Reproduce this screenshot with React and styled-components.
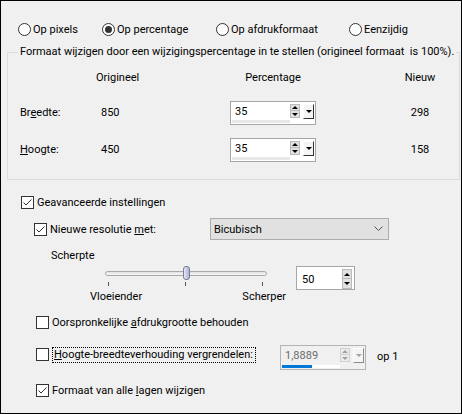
import React from "react";
import styled, { createGlobalStyle } from "styled-components";

const GlobalStyle = createGlobalStyle`
  body {
    margin: 0;
    background: #f0f0f0;
    font-family: Roboto, "Liberation Sans", sans-serif;
    font-size: 11px;
    color: #000;
  }
`;

const Window = styled.div`
  width: 462px;
  height: 414px;
  box-sizing: border-box;
  border: 1px solid #000;
  background: #f0f0f0;
  padding-top: 20px;
  line-height: 15px;
`;

const RadioRow = styled.div`
  display: grid;
  grid-template-columns: 84px 114px 133px auto;
  padding-left: 17px;
  height: 17px;
  align-items: center;
`;

const RadioOption = styled.label`
  display: flex;
  align-items: center;
  gap: 2px;
`;

const RadioCircle = styled.span`
  width: 13px;
  height: 13px;
  box-sizing: border-box;
  border: 1px solid #333;
  border-radius: 50%;
  background: #fff;
  display: flex;
  align-items: center;
  justify-content: center;
  &::after {
    content: "";
    width: 7px;
    height: 7px;
    border-radius: 50%;
    background: ${(p) => (p.$checked ? "#333" : "transparent")};
  }
`;

const Group = styled.fieldset`
  margin: 7px 0 0 6px;
  width: 453px;
  box-sizing: border-box;
  padding: 0 0 17px 12px;
  border: 1px solid #dcdcdc;
`;

const Legend = styled.legend`
  margin-left: -2px;
  padding: 0 2px;
  line-height: 14px;
`;

const SizeGrid = styled.div`
  display: grid;
  grid-template-columns: 76px 134px 86px 74px 60px;
  grid-template-rows: 17px 24px 24px;
  row-gap: 13px;
  padding-top: 12px;
  align-items: center;
`;

const Head = styled.div`
  grid-column: ${(p) => p.$col};
  align-self: start;
  line-height: 14px;
  text-align: ${(p) => (p.$center ? "center" : "left")};
`;

const Cell = styled.div`
  grid-column: ${(p) => p.$col};
  padding-left: ${(p) => p.$indent || 0}px;
  margin-top: ${(p) => p.$up || 0}px;
  text-align: ${(p) => (p.$center ? "center" : "left")};
`;

const SpinBox = styled.div`
  width: ${(p) => p.$w}px;
  height: ${(p) => p.$h || 24}px;
  box-sizing: border-box;
  border: 1px solid ${(p) => (p.$disabled ? "#b4b4b4" : "#a6a6a6")};
  background: ${(p) => (p.$disabled ? "#f0f0f0" : "#fff")};
  display: flex;
  margin-left: ${(p) => p.$ml || 0}px;
  flex-shrink: 0;
`;

const Field = styled.div`
  flex: 1;
  display: flex;
  flex-direction: column;
  justify-content: space-between;
  padding: 2px 0 1px 1px;
`;

const FieldText = styled.span`
  padding-left: ${(p) => p.$pad || 3}px;
  color: ${(p) => (p.$disabled ? "#6d6d6d" : "#000")};
  padding-top: ${(p) => p.$top || 0}px;
`;

const Bar = styled.div`
  height: 3px;
  background: ${(p) => (p.$disabled ? "#fff" : "#e8e8e8")};
  display: flex;
`;

const BarFill = styled.div`
  background: #0078d7;
  height: 100%;
`;

const SpinButtons = styled.div`
  display: flex;
  flex-direction: column;
  padding-top: 2px;
  margin-right: ${(p) => (p.$big ? 2 : 1)}px;
`;

const SpinBtn = styled.div`
  width: 10px;
  height: ${(p) => (p.$big ? 10 : 7)}px;
  box-sizing: border-box;
  background: ${(p) => (p.$disabled ? "#ececec" : "#e1e1e1")};
  border: 1px solid ${(p) => (p.$disabled ? "#d0d0d0" : "#b9b9b9")};
  display: flex;
  align-items: center;
  justify-content: center;
  & + & {
    border-top: none;
  }
`;

const Arrow = styled.span`
  width: 0;
  height: 0;
  border-left: 3px solid transparent;
  border-right: 3px solid transparent;
  ${(p) => (p.$up ? "border-bottom" : "border-top")}: 3px solid
    ${(p) => (p.$disabled ? "#a0a0a0" : "#000")};
`;

const DropBtn = styled.div`
  width: 11px;
  height: 15px;
  margin: 2px 1px 0 2px;
  box-sizing: border-box;
  background: #f4f4f4;
  border: 1px solid #fff;
  border-right-color: ${(p) => (p.$disabled ? "#8a8a8a" : "#333")};
  border-bottom-color: ${(p) => (p.$disabled ? "#8a8a8a" : "#333")};
  display: flex;
  align-items: center;
  justify-content: center;
`;

const Advanced = styled.div`
  display: flex;
  flex-direction: column;
  padding: 15px 0 0 20px;
`;

const CheckRow = styled.div`
  display: flex;
  align-items: ${(p) => p.$align || "center"};
  margin-top: ${(p) => p.$mt || 0}px;
  padding-left: ${(p) => p.$indent || 0}px;
  height: ${(p) => p.$h || 15}px;
`;

const CheckLabel = styled.label`
  display: flex;
  align-items: ${(p) => p.$align || "center"};
  gap: 3px;
  width: ${(p) => (p.$w ? p.$w + "px" : "auto")};
  flex-shrink: 0;
`;

const LabelText = styled.span`
  white-space: nowrap;
`;

const Box = styled.span`
  width: 13px;
  height: 13px;
  box-sizing: border-box;
  border: 1px solid #333;
  background: #fff;
  display: flex;
  align-items: center;
  justify-content: center;
  flex-shrink: 0;
  margin-top: ${(p) => p.$mt || 0}px;
`;

const FocusText = styled.span`
  border: 1px dotted #000;
  padding: 0 0 0 1px;
  width: 204px;
  height: 16px;
  box-sizing: border-box;
  line-height: 14px;
  white-space: nowrap;
`;

const Select = styled.div`
  width: 179px;
  height: 22px;
  box-sizing: border-box;
  border: 1px solid #adadad;
  background: #e1e1e1;
  display: flex;
  align-items: center;
  justify-content: space-between;
  padding: 0 5px 0 3px;
`;

const Caption = styled.div`
  margin-top: 9px;
  padding-left: 30px;
  height: 14px;
  line-height: 14px;
`;

const SliderRow = styled.div`
  display: flex;
  margin-top: 3px;
  padding-left: 69px;
  gap: 10px;
  align-items: flex-start;
`;

const SliderBlock = styled.div`
  width: 196px;
  display: flex;
  flex-direction: column;
`;

const TrackArea = styled.div`
  position: relative;
  height: 14px;
  margin-left: 15px;
  width: 162px;
  display: flex;
  align-items: center;
`;

const Track = styled.div`
  width: 100%;
  height: 5px;
  box-sizing: border-box;
  border: 1px solid #a9a9a9;
  border-radius: 3px;
  background: linear-gradient(#e2e2e2, #f6f6f6);
`;

const Thumb = styled.div`
  position: absolute;
  top: 0;
  width: 7px;
  height: 14px;
  box-sizing: border-box;
  border: 1px solid #7c7c8c;
  border-radius: 3px;
  background: linear-gradient(90deg, #e6e8f8, #c3c7e6 60%, #aab0d8);
`;

const Ticks = styled.div`
  display: flex;
  justify-content: space-between;
  padding: 2px 23px 0 18px;
  height: 4px;
`;

const Tick = styled.span`
  width: 1px;
  height: 4px;
  background: #555;
`;

const SliderLabels = styled.div`
  display: flex;
  justify-content: space-between;
  margin-top: 3px;
`;

const Suffix = styled.span`
  margin-left: 11px;
  margin-top: 4px;
`;

const Check = () => (
  <svg width="11" height="11" viewBox="0 0 11 11">
    <path d="M1.5 5.5 L4 8 L9.5 2.5" fill="none" stroke="#333" strokeWidth="1" />
  </svg>
);

const CheckBox = ({ checked, mt }) => <Box $mt={mt}>{checked && <Check />}</Box>;

const Radio = ({ checked, children }) => (
  <RadioOption>
    <RadioCircle $checked={checked} />
    <LabelText>{children}</LabelText>
  </RadioOption>
);

const PercentSpin = ({ value }) => (
  <SpinBox $w={86}>
    <Field>
      <FieldText>{value}</FieldText>
      <Bar />
    </Field>
    <SpinButtons>
      <SpinBtn>
        <Arrow $up />
      </SpinBtn>
      <SpinBtn>
        <Arrow />
      </SpinBtn>
    </SpinButtons>
    <DropBtn>
      <Arrow />
    </DropBtn>
  </SpinBox>
);

const Chevron = () => (
  <svg width="9" height="6" viewBox="0 0 9 6">
    <path d="M0.5 0.5 L4.5 4.5 L8.5 0.5" fill="none" stroke="#555" strokeWidth="1" />
  </svg>
);

export default function App() {
  const ratioFill = 51; // share of the bar filled under the disabled value
  return (
    <>
      <GlobalStyle />
      <Window>
        <RadioRow>
          <Radio>Op pixels</Radio>
          <Radio checked>Op percentage</Radio>
          <Radio>Op afdrukformaat</Radio>
          <Radio>Eenzijdig</Radio>
        </RadioRow>

        <Group>
          <Legend>
            Formaat wijzigen door een wijzigingspercentage in te stellen (origineel formaat&nbsp; is 100%).
          </Legend>
          <SizeGrid>
            <Head $col={2}>Origineel</Head>
            <Head $col={3} $center>
              Percentage
            </Head>
            <Head $col={5} $center>
              Nieuw
            </Head>

            <Cell $col={1} $up={-2}>
              Br<u>e</u>edte:
            </Cell>
            <Cell $col={2} $indent={5} $up={-2}>
              850
            </Cell>
            <Cell $col={3}>
              <PercentSpin value="35" />
            </Cell>
            <Cell $col={5} $center $up={-2}>
              298
            </Cell>

            <Cell $col={1} $up={-2}>
              <u>H</u>oogte:
            </Cell>
            <Cell $col={2} $indent={5} $up={-2}>
              450
            </Cell>
            <Cell $col={3}>
              <PercentSpin value="35" />
            </Cell>
            <Cell $col={5} $center $up={-2}>
              158
            </Cell>
          </SizeGrid>
        </Group>

        <Advanced>
          <CheckRow>
            <CheckLabel>
              <CheckBox checked />
              <LabelText>Geavanceerde instellingen</LabelText>
            </CheckLabel>
          </CheckRow>

          <CheckRow $mt={8} $h={22} $indent={13}>
            <CheckLabel $w={176}>
              <CheckBox checked />
              <LabelText>
                Nieuwe resolutie <u>m</u>et:
              </LabelText>
            </CheckLabel>
            <Select>
              <span>Bicubisch</span>
              <Chevron />
            </Select>
          </CheckRow>

          <Caption>Scherpte</Caption>

          <SliderRow>
            <SliderBlock>
              <TrackArea>
                <Track />
                <Thumb style={{ left: `${(162 - 7) * 0.5}px` }} />
              </TrackArea>
              <Ticks>
                <Tick />
                <Tick />
                <Tick />
              </Ticks>
              <SliderLabels>
                <span>Vloeiender</span>
                <span>Scherper</span>
              </SliderLabels>
            </SliderBlock>
            <SpinBox $w={59}>
              <Field>
                <FieldText $top={3} $pad={4}>
                  50
                </FieldText>
              </Field>
              <SpinButtons $big>
                <SpinBtn $big>
                  <Arrow $up />
                </SpinBtn>
                <SpinBtn $big>
                  <Arrow />
                </SpinBtn>
              </SpinButtons>
            </SpinBox>
          </SliderRow>

          <CheckRow $mt={11} $indent={15}>
            <CheckLabel>
              <CheckBox />
              <LabelText>
                Oorspronkelijke <u>a</u>fdrukgrootte behouden
              </LabelText>
            </CheckLabel>
          </CheckRow>

          <CheckRow $mt={15} $h={25} $indent={15} $align="flex-start">
            <CheckLabel $align="flex-start">
              <CheckBox mt={3} />
              <FocusText style={{ marginTop: 2 }}>
                <u>H</u>oogte-breedteverhouding vergrendelen:
              </FocusText>
            </CheckLabel>
            <SpinBox $w={86} $h={25} $ml={24} $disabled>
              <Field>
                <FieldText $disabled>1,8889</FieldText>
                <Bar $disabled>
                  <BarFill style={{ width: `${ratioFill}%` }} />
                </Bar>
              </Field>
              <SpinButtons>
                <SpinBtn $disabled>
                  <Arrow $up $disabled />
                </SpinBtn>
                <SpinBtn $disabled>
                  <Arrow $disabled />
                </SpinBtn>
              </SpinButtons>
              <DropBtn $disabled>
                <Arrow $disabled />
              </DropBtn>
            </SpinBox>
            <Suffix>op 1</Suffix>
          </CheckRow>

          <CheckRow $mt={13} $indent={15}>
            <CheckLabel>
              <CheckBox checked />
              <LabelText>
                Formaat van alle <u>l</u>agen wijzigen
              </LabelText>
            </CheckLabel>
          </CheckRow>
        </Advanced>
      </Window>
    </>
  );
}
